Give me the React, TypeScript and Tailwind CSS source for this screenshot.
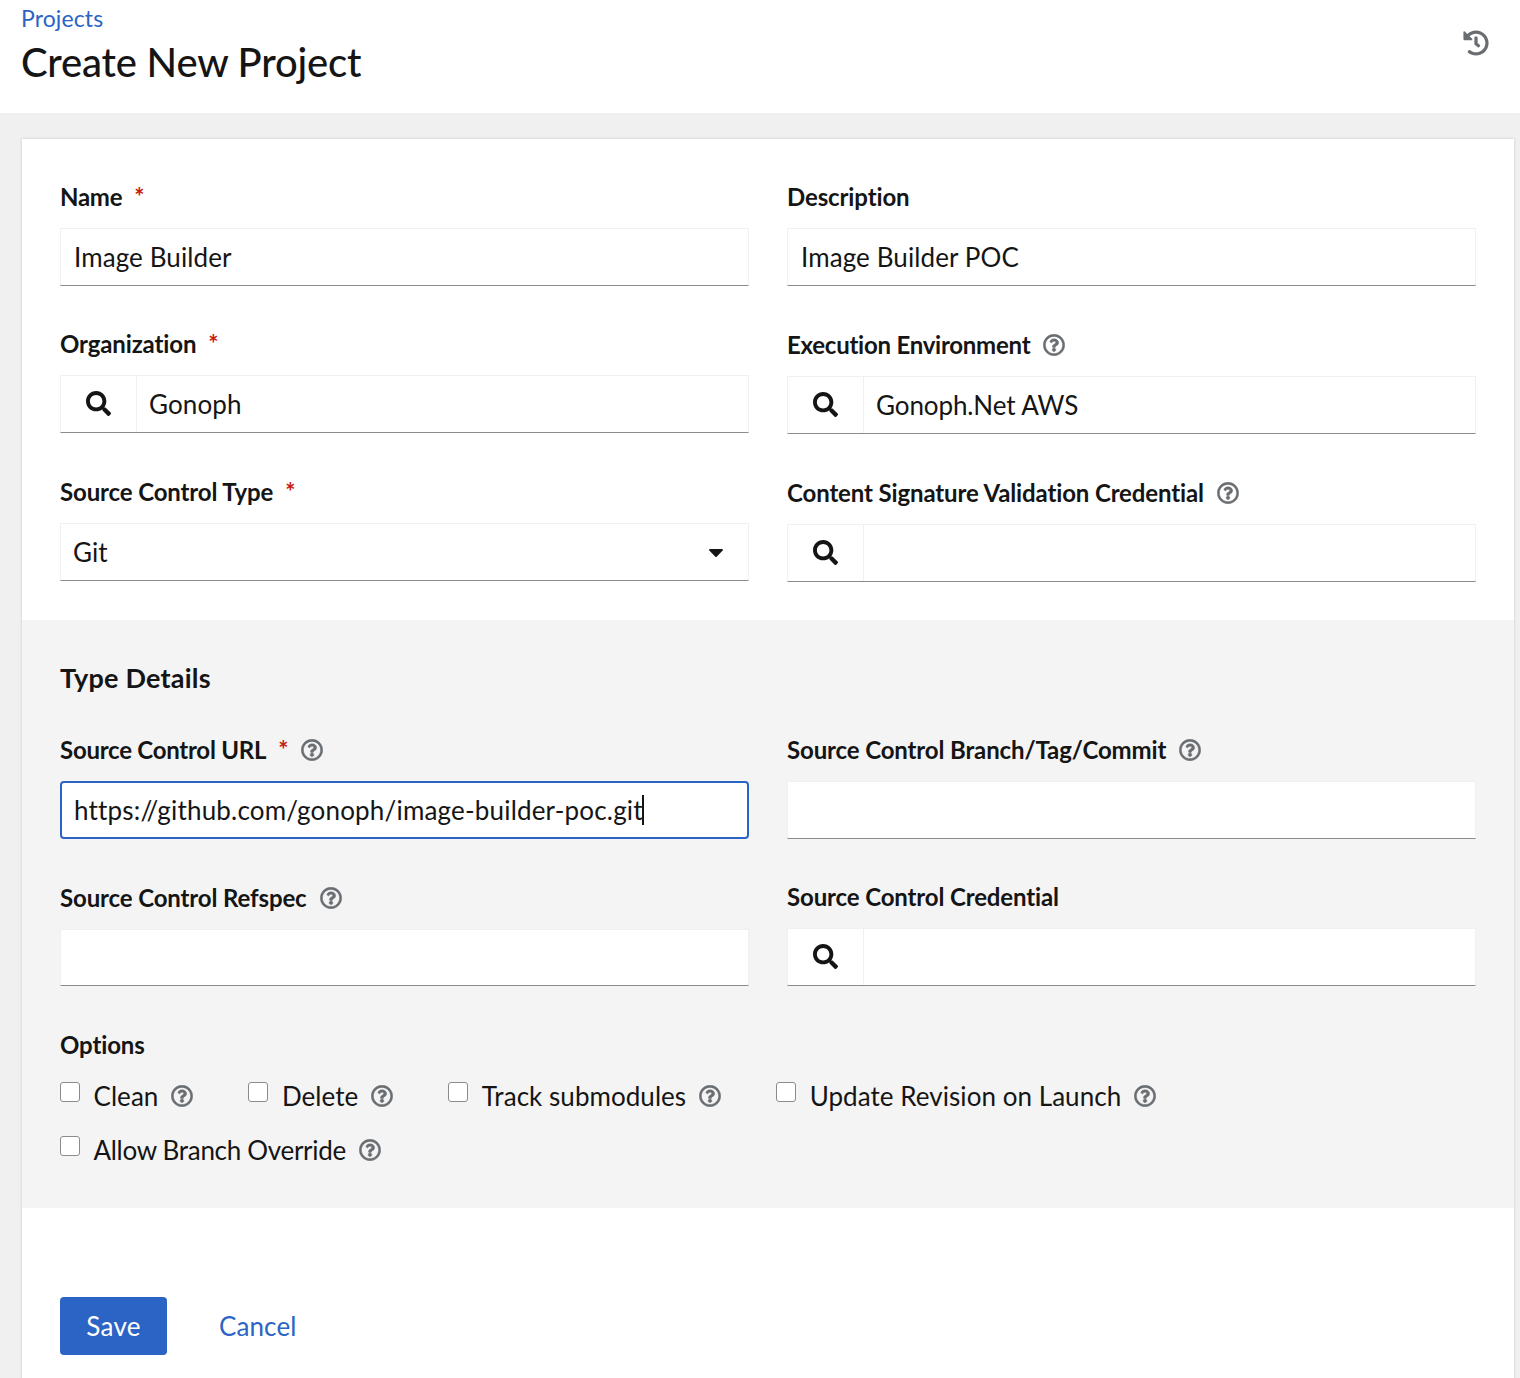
import React from "react";
import { FaCaretDown, FaHistory, FaRegQuestionCircle, FaSearch } from "react-icons/fa";

const Help = ({ className = "ml-[13px]" }: { className?: string }) => (
  <FaRegQuestionCircle className={`${className} shrink-0 text-[22px] stroke-[12] text-[#6a6e73]`} />
);

const Req = () => <span className="ml-[12px] text-[#c9190b] text-[24px] font-bold leading-none">*</span>;

const Label = ({ text, req, help, tight }: { text: string; req?: boolean; help?: boolean; tight?: boolean }) => (
  <div
    className={`flex h-[26px] items-center pb-[1px] text-[24px] font-bold text-[#151515] whitespace-nowrap ${
      tight ? "tracking-[-0.25px]" : "tracking-[-0.13px]"
    }`}
  >
    <span>{text}</span>
    {req && <Req />}
    {help && <Help />}
  </div>
);

const boxCls =
  "flex items-center bg-white border border-[#f0f0f0] border-b-[#8a8d90] text-[26px] tracking-[0.1px] text-[#151515] whitespace-nowrap";

const TextField = ({ value, short }: { value?: string; short?: boolean }) => (
  <div className={`${boxCls} pl-[13px] ${short ? "h-[57px]" : "h-[58px]"}`}>{value}</div>
);

const SearchField = ({ value, tight }: { value?: string; tight?: boolean }) => (
  <div className={`${boxCls} h-[58px]`}>
    <div className="flex h-full w-[76px] shrink-0 items-center justify-center border-r border-[#f0f0f0]">
      <FaSearch className="-mt-[1px] text-[25px] text-[#151515]" />
    </div>
    <span className={`pl-[12px] ${tight ? "tracking-[-0.1px]" : ""}`}>{value}</span>
  </div>
);

const Field = ({
  label,
  req,
  help,
  shift,
  tight,
  children,
}: {
  label: string;
  req?: boolean;
  help?: boolean;
  shift?: boolean;
  tight?: boolean;
  children: React.ReactNode;
}) => (
  <div className={`flex flex-col gap-[18px] ${shift ? "mt-[1px]" : ""}`}>
    <Label text={label} req={req} help={help} tight={tight} />
    {children}
  </div>
);

const Check = ({ label, className = "", tight }: { label: string; className?: string; tight?: boolean }) => (
  <div
    className={`flex h-[30px] items-center text-[26px] text-[#151515] whitespace-nowrap ${
      tight ? "tracking-[-0.3px]" : "tracking-[0.05px]"
    } ${className}`}
  >
    <span className="-mt-[8px] h-[20px] w-[20px] shrink-0 rounded-[3px] border border-[#8a8d90] bg-white" />
    <span className="ml-[13.5px]">{label}</span>
    <Help />
  </div>
);

export default function App() {
  return (
    <div className="h-[1378px] overflow-hidden bg-[#f0f0f0] font-['Lato','Liberation_Sans',sans-serif]">
      <header className="relative h-[113px] bg-white pl-[22px]">
        <a className="-ml-[1px] block pt-[4px] text-[23px] leading-[28px] tracking-[0.1px] text-[#2b64c4]">Projects</a>
        <h1 className="-ml-[1px] mt-[7px] text-[40px] font-medium leading-[46px] tracking-[-0.2px] text-[#151515]">
          Create New Project
        </h1>
        <FaHistory className="absolute right-[31px] top-[30px] text-[26px] text-[#6a6e73]" />
      </header>

      <main className="mr-[6px] ml-[22px] mt-[26px] bg-white shadow-[0_0_3px_rgba(3,3,3,0.15)]">
        <section className="grid grid-cols-2 gap-x-[38px] gap-y-[45px] px-[38px] pt-[45px] pb-[38px]">
          <Field label="Name" req tight>
            <TextField value="Image Builder" />
          </Field>
          <Field label="Description">
            <TextField value="Image Builder POC" />
          </Field>
          <Field label="Organization" req>
            <SearchField value="Gonoph" />
          </Field>
          <Field label="Execution Environment" help shift tight>
            <SearchField value="Gonoph.Net AWS" tight />
          </Field>
          <Field label="Source Control Type" req>
            <div className={`${boxCls} h-[58px] justify-between pl-[12px] pr-[20px]`}>
              <span>Git</span>
              <FaCaretDown className="text-[24px] text-[#151515]" />
            </div>
          </Field>
          <Field label="Content Signature Validation Credential" help shift>
            <SearchField />
          </Field>
        </section>

        <section className="bg-[#f4f4f4] px-[38px] pt-[43px] pb-[43px]">
          <h2 className="h-[30px] text-[27px] font-bold leading-[30px] tracking-[0.2px] text-[#151515]">Type Details</h2>
          <div className="mt-[44px] grid grid-cols-2 gap-x-[38px] gap-y-[45px]">
            <Field label="Source Control URL" req help tight>
              <div className="flex h-[58px] items-center rounded-[4px] border-2 border-[#2b64c4] bg-white pl-[12px] text-[26px] tracking-[0.18px] text-[#151515] whitespace-nowrap">
                <span>https://github.com/gonoph/image-builder-poc.git</span>
                <span className="ml-[-1px] h-[30px] w-[2px] bg-[#151515]" />
              </div>
            </Field>
            <Field label="Source Control Branch/Tag/Commit" help>
              <TextField />
            </Field>
            <Field label="Source Control Refspec" help shift>
              <TextField short />
            </Field>
            <Field label="Source Control Credential">
              <SearchField />
            </Field>
          </div>
          <div className="mt-[46px]">
            <Label text="Options" />
            <div className="mt-[23px] flex flex-wrap gap-y-[24px]">
              <Check label="Clean" className="mr-[55px]" />
              <Check label="Delete" className="mr-[55px]" />
              <Check label="Track submodules" className="mr-[55px]" />
              <Check label="Update Revision on Launch" className="mr-[300px]" />
              <Check label="Allow Branch Override" tight />
            </div>
          </div>
        </section>

        <div className="flex items-center gap-[52px] px-[38px] pt-[89px] pb-[60px]">
          <button className="h-[58px] w-[107px] rounded-[4px] bg-[#2b64c4] text-[26px] tracking-[0.3px] text-white">
            Save
          </button>
          <a className="text-[26px] tracking-[0.1px] text-[#2b64c4]">Cancel</a>
        </div>
      </main>
    </div>
  );
}
